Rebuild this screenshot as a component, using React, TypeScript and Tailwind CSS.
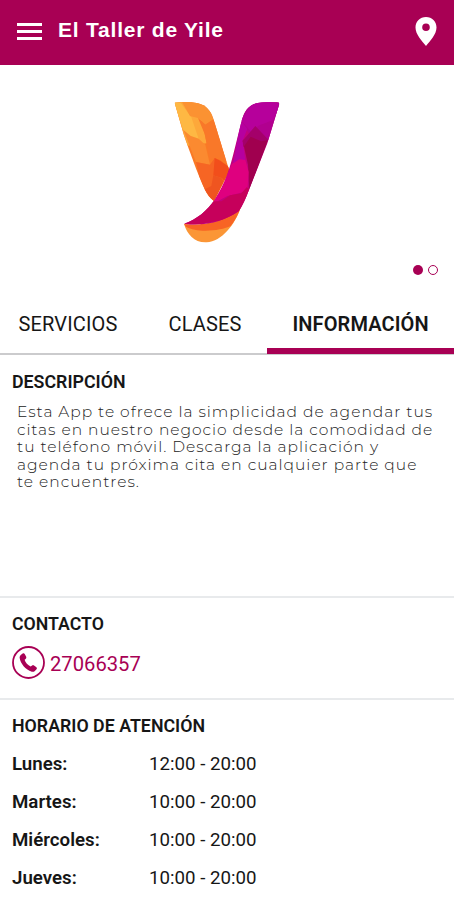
const hours = [
  { day: 'Lunes:', time: '12:00 - 20:00' },
  { day: 'Martes:', time: '10:00 - 20:00' },
  { day: 'Miércoles:', time: '10:00 - 20:00' },
  { day: 'Jueves:', time: '10:00 - 20:00' },
];

const description = [
  'Esta App te ofrece la simplicidad de agendar tus',
  'citas en nuestro negocio desde la comodidad de',
  'tu teléfono móvil. Descarga la aplicación y',
  'agenda tu próxima cita en cualquier parte que',
  'te encuentres.',
];

function Logo() {
  return (
    <svg width="130" height="160" viewBox="0 0 390 480" aria-hidden="true">
      <defs>
        <clipPath id="left">
          <path d="M44 38C66 35 96 36 114 40C138 46 152 62 160 86L208 242L162 333C151 326 142 314 134 298C112 250 88 182 72 136Z" />
        </clipPath>
        <clipPath id="right">
          <path d="M358 41L322 160L266 302C257 326 248 346 236 364C190 394 138 410 72 401C110 389 143 360 164 329C196 282 210 232 224 176L244 96C250 72 260 52 278 44C294 36 326 37 350 37Q358 37 358 41Z" />
        </clipPath>
      </defs>
      <g clipPath="url(#left)">
        <rect x="30" y="20" width="190" height="330" fill="#fa7a25" />
        <path d="M30 20H80C112 60 132 110 140 160L60 170Z" fill="#fda83a" />
        <path d="M40 36L62 38L94 82L116 146L92 138L70 120Z" fill="#feb843" />
        <path d="M66 36C110 30 150 40 160 88L136 104L114 84L90 78Z" fill="#fb9232" />
        <path d="M114 84L136 104L164 86L200 216L170 202L150 212L134 132Z" fill="#f97829" />
        <path d="M70 120L92 138L116 146L136 164L150 224L108 216Z" fill="#fb8a30" />
        <path d="M108 216L150 224L164 204L180 210L214 236V350H155L118 262Z" fill="#f66524" />
        <path d="M164 204L180 212L214 236V300L186 264L160 256Z" fill="#f24e1b" />
        <path d="M160 256L184 264L200 290L160 340L134 298L154 288Z" fill="#ef5520" />
      </g>
      <path d="M72 402C130 414 190 394 242 354C224 404 186 454 140 457C104 459 82 434 72 402Z" fill="#fb9636" />
      <path d="M72 402C132 410 194 392 242 352C235 374 225 392 212 408C184 422 112 430 78 410Z" fill="#f86424" />
      <g clipPath="url(#right)">
        <rect x="60" y="20" width="310" height="400" fill="#c1007d" />
        <path d="M220 30H365V110L322 154L286 112L270 136L246 96Z" fill="#b1008f" />
        <path d="M244 92L276 38L308 32L364 42L340 90L298 106L272 124Z" fill="#b6009b" />
        <path d="M242 92L262 116L248 152L256 210L234 212L216 238Z" fill="#b600a0" />
        <path d="M248 152L270 132L324 150L268 302L264 224Z" fill="#a0004f" />
        <path d="M286 108L326 150L304 154L272 140L250 172L248 152Z" fill="#a4006a" />
        <path d="M216 222L238 208L256 210L266 246L262 304L202 318L158 342Z" fill="#df007f" />
        <path d="M158 334L184 334L210 316L244 310L260 292L280 304L244 380L60 412Z" fill="#c6005b" />
      </g>
    </svg>
  );
}

export default function App() {
  return (
    <main className="flex h-[900px] w-[454px] flex-col overflow-hidden bg-white font-[Roboto,sans-serif] text-[#161616]">
      <header className="flex h-[65px] shrink-0 items-center bg-[#a80054] pl-[17px] pr-[17px] text-white">
        <div className="mt-[-3px] flex h-[17px] w-[25px] flex-col justify-between">
          <span className="h-[3px] bg-white" />
          <span className="h-[3px] bg-white" />
          <span className="h-[3px] bg-white" />
        </div>
        <h1 className="-mt-[5px] ml-4 grow whitespace-nowrap font-['Liberation_Sans',sans-serif] text-[21px] font-bold leading-6 tracking-[0.78px]">
          El Taller de Yile
        </h1>
        <svg className="-mt-[3px]" width="22" height="30" viewBox="0 0 22 30" fill="white" aria-hidden="true">
          <path fillRule="evenodd" d="M11 1C5 1 .5 5.500 .5 11.500C.5 18.500 7 25 11 30C15 25 21.500 18.500 21.500 11.500C21.500 5.500 17 1 11 1ZM11 7.500A3.800 3.800 0 1 1 11 15.100A3.800 3.800 0 0 1 11 7.500Z" />
        </svg>
      </header>

      <section className="flex h-[228px] shrink-0 flex-col pt-[25px]">
        <div className="flex pl-40">
          <Logo />
        </div>
        <div className="mt-[15px] flex justify-end gap-[5px] pr-4">
          <span className="size-2.5 rounded-full bg-[#a80054]" />
          <span className="size-2.5 rounded-full border border-[#a80054]" />
        </div>
      </section>

      <nav className="flex h-[62px] shrink-0 whitespace-nowrap border-b-2 border-[#cbcbcd] text-xl leading-[62px]">
        <span className="w-[150px] pl-[18.5px] tracking-[0.15px]">SERVICIOS</span>
        <span className="w-[117px] pl-[18.5px] tracking-[0.15px]">CLASES</span>
        <span className="-mb-0.5 h-[61px] w-[187px] border-b-[6px] border-[#a80054] pl-[25.5px] font-semibold tracking-[0.1px]">INFORMACIÓN</span>
      </nav>

      <section className="h-[241px] shrink-0 pl-3 pt-[15px]">
        <h2 className="text-[17.8px] font-semibold leading-6">DESCRIPCIÓN</h2>
        <p className="ml-[5px] mt-[9px] flex flex-col whitespace-nowrap font-[Montserrat,Inter,sans-serif] text-[15.5px] font-light leading-[17.6px] tracking-[0.97px] text-[#222222]">
          {description.map((line) => (
            <span key={line}>{line}</span>
          ))}
        </p>
      </section>

      <section className="h-[102px] shrink-0 border-t-2 border-[#e8eaec] pl-3 pt-[14px]">
        <h2 className="text-[17.7px] font-semibold leading-6">CONTACTO</h2>
        <div className="mt-[10px] flex items-center gap-[5px] text-[#a80054]">
          <svg width="33" height="33" viewBox="0 0 33 33" aria-hidden="true">
            <circle cx="16.500" cy="16.500" r="15.500" fill="none" stroke="currentColor" strokeWidth="1.800" />
            <path fill="currentColor" d="M9 8.800L11 7.300Q12 6.800 12.700 7.900L14.200 10.800Q14.700 12 13.600 12.900L12.600 13.800C13.300 16.500 15.900 19.300 18.700 20.600L20.100 19.400Q21 18.800 22 19.400L24.400 21.200Q25.500 22 24.500 23.200L22.600 25.200Q21.500 26.100 19.800 25.700C13.700 24 8.200 17.500 7.600 11.600Q7.600 9.900 9 8.800Z" />
          </svg>
          <span className="mt-0.5 text-[20.2px] leading-6">27066357</span>
        </div>
      </section>

      <section className="shrink-0 border-t-2 border-[#e8eaec] pl-3 pt-[14px]">
        <h2 className="text-[17.8px] font-semibold leading-6">HORARIO DE ATENCIÓN</h2>
        <dl className="mt-[6.5px] flex flex-col text-[18.7px] leading-[38.2px]">
          {hours.map((row) => (
            <div key={row.day} className="flex">
              <dt className="w-[137px] font-semibold">{row.day}</dt>
              <dd>{row.time}</dd>
            </div>
          ))}
        </dl>
      </section>
    </main>
  );
}
